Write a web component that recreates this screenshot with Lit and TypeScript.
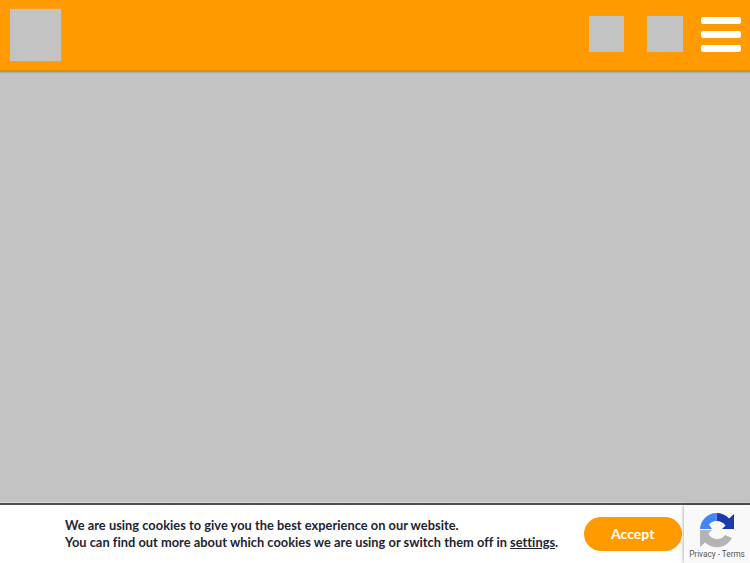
import { LitElement, html, css } from "lit";
import { customElement } from "lit/decorators.js";

@customElement("app-root")
export class AppRoot extends LitElement {
  static styles = css`
    :host { display: flex; flex-direction: column; height: 563px; width: 750px; overflow: hidden; position: relative; font-family: "Lato", "Noto Sans", sans-serif; background: #c3c3c3; }
    * { box-sizing: border-box; }
    .header { height: 72px; flex: none; background: #ff9b00; border-bottom: 2px solid #e58c05; box-shadow: 0 1px 1px rgba(0,0,0,.1); display: flex; align-items: flex-start; padding: 9px 9px 0 10px; }
    .logo { width: 51px; height: 52px; background: #c3c3c3; box-shadow: 0 0 1px #b5b5c5; }
    .spacer { flex: 1; }
    .actions { display: flex; align-items: center; margin-top: 7px; }
    .sq { width: 35.6px; height: 36px; background: #c3c3c3; margin-right: 22.700px; }
    .sq + .sq { margin-right: 18.300px; }
    .burger { width: 40px; height: 36px; display: flex; flex-direction: column; justify-content: space-between; padding-top: 1px; }
    .burger i { display: block; height: 7px; border-radius: 2px; background: #fff; }
    .main { flex: 1; }
    .cookie { flex: none; height: 60px; background: #fff; border-top: 2px solid #4f4f4f; display: flex; align-items: flex-start; padding: 12px 0 0 65px; color: #1e2433; font-size: 12.800px; letter-spacing: .035px; line-height: 17px; font-weight: 700; box-shadow: 0 -1px 0 #d8d8d8; }
    .text { width: 519px; white-space: nowrap; }
    .text a { color: inherit; text-decoration: underline; }
    .accept { width: 97.5px; height: 33.5px; border: none; border-radius: 17px; background: #ff9b00; color: #fff; font: 700 14px/33px "Lato", sans-serif; padding: 0; }
    .badge { position: absolute; right: 0; bottom: 0; width: 66px; height: 58px; background: #f9f9f9; box-shadow: 0 0 4px rgba(60,60,60,.55); display: flex; flex-direction: column; align-items: center; padding-top: 7px; }
    .badge svg { display: block; }
    .badge span { font: 8.200px/10px "Roboto", sans-serif; color: #555; margin-top: 1px; white-space: nowrap; }
  `;

  render() {
    return html`
      <div class="header">
        <div class="logo"></div>
        <div class="spacer"></div>
        <div class="actions">
          <div class="sq"></div>
          <div class="sq"></div>
          <div class="burger"><i></i><i></i><i></i></div>
        </div>
      </div>
      <div class="main"></div>
      <div class="cookie">
        <div class="text">
          We are using cookies to give you the best experience on our website.<br />
          You can find out more about which cookies we are using or switch them off in <a href="#">settings</a>.
        </div>
        <button class="accept">Accept</button>
      </div>
      <div class="badge">
        <svg width="36" height="36" viewBox="0 0 36 36">
          <path fill="#1c3aa9" d="M17.500 1 A17 17 0 0 1 30 6.500 L35 2 V17 H23 L26.500 13.500 A11 11 0 0 0 17.500 9 Z" />
          <path fill="#4285f4" d="M17.500 1 V9 A9 9 0 0 0 10 12.500 L13 17 H1 A17 17 0 0 1 17.500 1 Z" />
          <path fill="#b4b4b4" d="M1 18 H13 L9.500 21.500 A9.500 9.500 0 0 0 26 23 L33 26 A17 17 0 0 1 6 30.500 L1 35 Z" />
        </svg>
        <span>Privacy - Terms</span>
      </div>
    `;
  }
}
